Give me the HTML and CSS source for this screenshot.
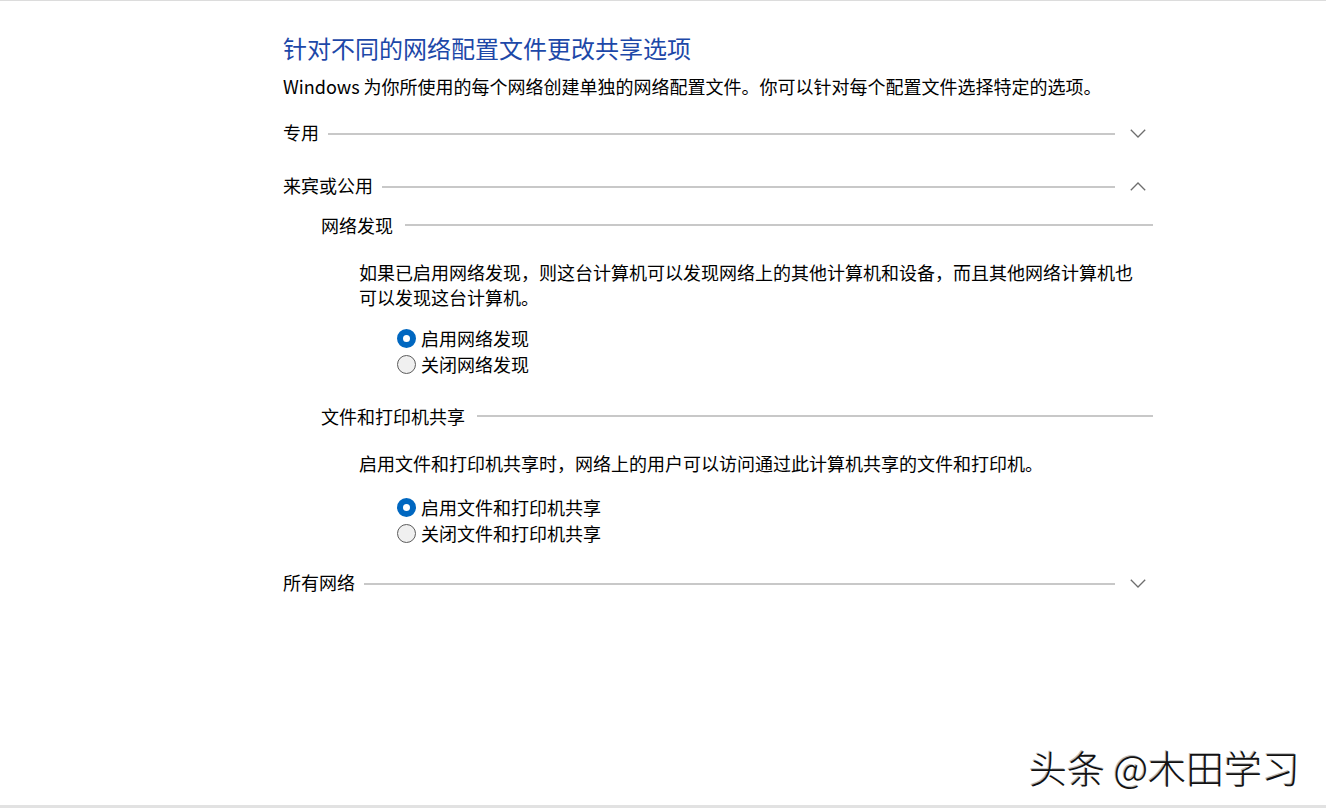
FILE: index.html
```html
<!DOCTYPE html>
<html lang="zh-CN">
<head>
    <meta charset="UTF-8">
    <title>高级共享设置</title>
    <link rel="stylesheet" href="styles.css">
</head>
<body>
    <div class="page">
        <h1 class="title">针对不同的网络配置文件更改共享选项</h1>
        <p class="intro">Windows 为你所使用的每个网络创建单独的网络配置文件。你可以针对每个配置文件选择特定的选项。</p>

        <!-- 专用 (collapsed) -->
        <div class="section-head">
            <span class="section-label">专用</span>
            <span class="rule"></span>
            <svg class="chevron" width="16" height="9" viewBox="0 0 16 9"><polyline points="0.8,0.8 8,8 15.2,0.8"/></svg>
        </div>

        <!-- 来宾或公用 (expanded) -->
        <div class="section-head gap-top">
            <span class="section-label">来宾或公用</span>
            <span class="rule"></span>
            <svg class="chevron" width="16" height="9" viewBox="0 0 16 9"><polyline points="0.8,8.2 8,1 15.2,8.2"/></svg>
        </div>

        <div class="group">
            <div class="sub-head">
                <span class="section-label">网络发现</span>
                <span class="rule"></span>
            </div>
            <p class="desc">如果已启用网络发现，则这台计算机可以发现网络上的其他计算机和设备，而且其他网络计算机也可以发现这台计算机。</p>
            <div class="options">
                <label class="option"><span class="radio checked"></span>启用网络发现</label>
                <label class="option"><span class="radio"></span>关闭网络发现</label>
            </div>

            <div class="sub-head next">
                <span class="section-label">文件和打印机共享</span>
                <span class="rule"></span>
            </div>
            <p class="desc">启用文件和打印机共享时，网络上的用户可以访问通过此计算机共享的文件和打印机。</p>
            <div class="options tight">
                <label class="option"><span class="radio checked"></span>启用文件和打印机共享</label>
                <label class="option"><span class="radio"></span>关闭文件和打印机共享</label>
            </div>
        </div>

        <!-- 所有网络 (collapsed) -->
        <div class="section-head last">
            <span class="section-label">所有网络</span>
            <span class="rule"></span>
            <svg class="chevron" width="16" height="9" viewBox="0 0 16 9"><polyline points="0.8,0.8 8,8 15.2,0.8"/></svg>
        </div>
    </div>

    <div class="watermark">头条 @木田学习</div>
</body>
</html>
```

FILE: styles.css
```css
html, body {
    margin: 0;
    height: 100%;
}
body {
    box-sizing: border-box;
    border-top: 1px solid #dcdcdc;
    border-bottom: 3px solid #e2e2e2;
    background: #fff;
    color: #000;
    font-family: "Noto Sans CJK SC", "Noto Sans", sans-serif;
    position: relative;
}
.page {
    width: 870px;
    padding: 31px 0 0 283px;
}
.title {
    margin: 0;
    font-size: 24px;
    font-weight: normal;
    line-height: 32px;
    color: #1d48a8;
}
.intro {
    margin: 9px 0 0;
    font-size: 18px;
    line-height: 26px;
    white-space: nowrap;
}
.section-head,
.sub-head {
    display: flex;
    align-items: center;
    height: 30px;
    font-size: 18px;
    line-height: 30px;
}
.section-head {
    margin-top: 18px;
}
.section-head.gap-top {
    margin-top: 23px;
}
.section-head.last {
    margin-top: 21px;
}
.section-label {
    white-space: nowrap;
}
.rule {
    flex: 1;
    height: 2px;
    margin-left: 9px;
    background: #c8c8c8;
}
.section-head .rule {
    margin-top: 4px;
}
.chevron {
    margin: 3px 7px 0 15px;
    fill: none;
    stroke: #6e6e6e;
    stroke-width: 1.3;
}
.group {
    padding-left: 38px;
}
.sub-head {
    margin-top: 10px;
}
.sub-head .rule {
    margin-left: 12px;
}
.sub-head.next {
    margin-top: 24px;
}
.desc {
    margin: 20px 0 0 38px;
    width: 780px;
    font-size: 18px;
    line-height: 25px;
}
.options {
    margin: 15px 0 0 76px;
}
.options.tight {
    margin-top: 18px;
}
.option {
    display: flex;
    align-items: center;
    height: 26px;
    font-size: 18px;
}
.radio {
    box-sizing: border-box;
    width: 19px;
    height: 19px;
    margin-right: 5px;
    border-radius: 50%;
    border: 1px solid #5c5c5c;
    background: #f0f0f0;
}
.radio.checked {
    border: 6px solid #0067c0;
    background: #fff;
}
.watermark {
    position: absolute;
    right: 26px;
    bottom: 15px;
    font-family: "Noto Sans CJK SC", sans-serif;
    font-size: 38px;
    font-weight: 300;
    line-height: 46px;
    color: #111;
    text-shadow: 1px 1px 0 #fff, -1px -1px 0 #bbb;
}
```
